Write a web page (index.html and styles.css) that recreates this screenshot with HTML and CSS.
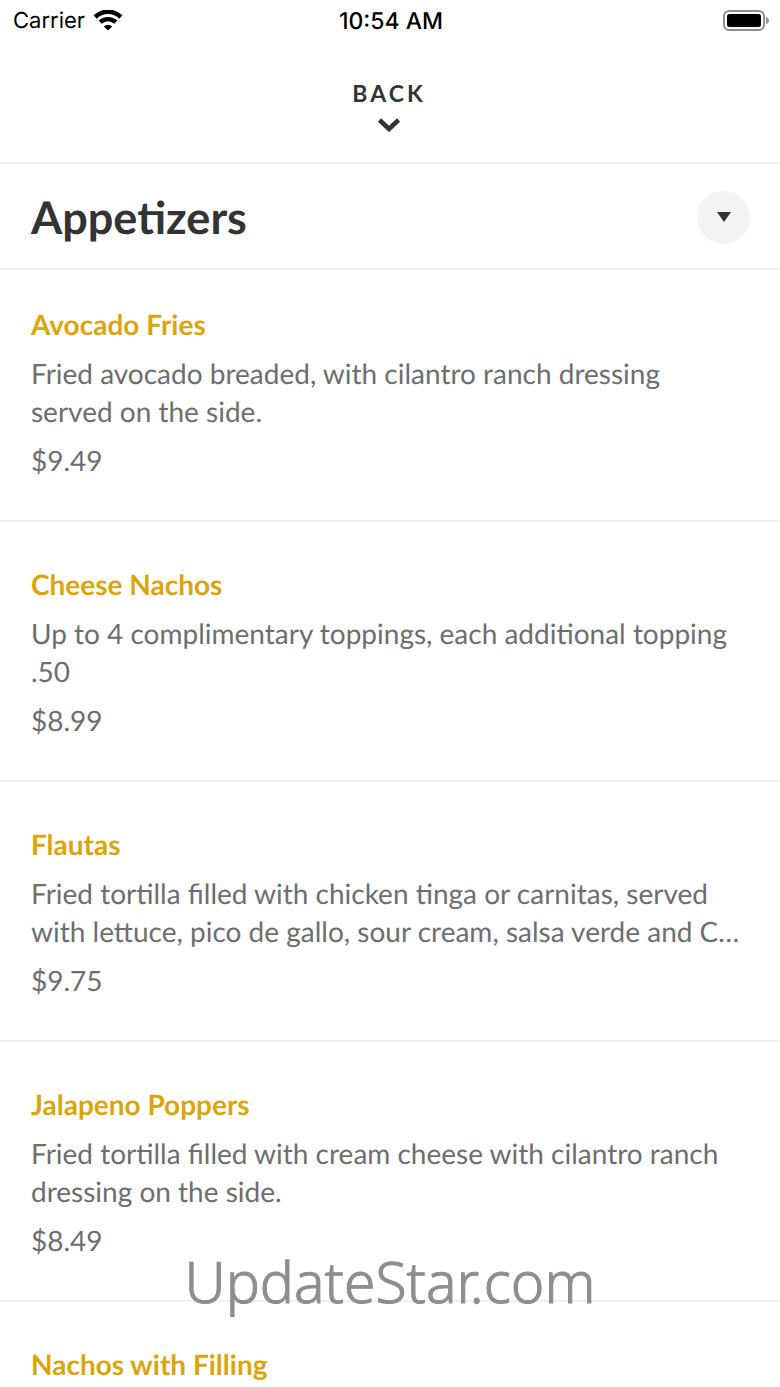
FILE: index.html
```html
<!DOCTYPE html>
<html lang="en">
<head>
  <meta charset="UTF-8">
  <meta name="viewport" content="width=device-width, initial-scale=1.0">
  <title>Appetizers</title>
  <link rel="stylesheet" href="styles.css">
</head>
<body>
  <div class="status-bar">
    <div class="carrier">
      <span>Carrier</span>
      <svg class="wifi" width="30" height="22" viewBox="0 0 30 22" aria-hidden="true">
        <path d="M2.2 7 A18.4 18.4 0 0 1 27.8 7" fill="none" stroke="#000" stroke-width="4.6"/>
        <path d="M7.2 12.2 A11.3 11.3 0 0 1 22.8 12.2" fill="none" stroke="#000" stroke-width="4.4"/>
        <path d="M15 20.5 L10.8 16.4 A6 6 0 0 1 19.2 16.4 Z"/>
      </svg>
    </div>
    <div class="time">10:54 AM</div>
    <svg class="battery" width="46" height="22" viewBox="0 0 46 22" aria-hidden="true">
      <rect x="1" y="1" width="40" height="19" rx="5" fill="none" stroke="#8e8e8e" stroke-width="2"/>
      <rect x="4" y="4" width="34" height="13" rx="2.5"/>
      <path d="M43 7 Q46 8 46 10.5 Q46 13 43 14 Z" fill="#8e8e8e"/>
    </svg>
  </div>

  <button class="back">
    <span>BACK</span>
    <svg width="22" height="14" viewBox="0 0 22 14" aria-hidden="true">
      <path d="M1.5 2 L11 11 L20.5 2" fill="none" stroke="#333" stroke-width="4.6"/>
    </svg>
  </button>

  <header class="category">
    <h1>Appetizers</h1>
    <button class="toggle" aria-label="Choose category">
      <svg width="14" height="10" viewBox="0 0 14 10" aria-hidden="true">
        <path d="M0 0 H14 L7 10 Z" fill="#333"/>
      </svg>
    </button>
  </header>

  <main class="menu">
    <article class="item">
      <h2>Avocado Fries</h2>
      <p class="description">Fried avocado breaded, with cilantro ranch dressing served on the side.</p>
      <p class="price">$9.49</p>
    </article>
    <article class="item">
      <h2>Cheese Nachos</h2>
      <p class="description">Up to 4 complimentary toppings, each additional topping .50</p>
      <p class="price">$8.99</p>
    </article>
    <article class="item">
      <h2>Flautas</h2>
      <p class="description">Fried tortilla filled with chicken tinga or carnitas, served with lettuce, pico de gallo, sour cream, salsa verde and C…</p>
      <p class="price">$9.75</p>
    </article>
    <article class="item">
      <h2>Jalapeno Poppers</h2>
      <p class="description">Fried tortilla filled with cream cheese with cilantro ranch dressing on the side.</p>
      <p class="price">$8.49</p>
    </article>
    <article class="item">
      <h2>Nachos with Filling</h2>
    </article>
  </main>

  <div class="watermark">UpdateStar.com</div>
</body>
</html>
```
FILE: styles.css
```css
* { box-sizing: border-box; }
body {
  margin: 0;
  font-family: Lato, sans-serif;
  font-size: 28px;
  line-height: 38px;
  color: #6e6e6e;
  background: #fff;
  text-rendering: geometricPrecision;
}
h1, h2, p { margin: 0; }
button {
  border: none;
  padding: 0;
  font-family: inherit;
  cursor: pointer;
}

.status-bar {
  display: grid;
  grid-template-columns: 1fr auto 1fr;
  align-items: center;
  height: 41px;
  padding: 0 11px 0 13px;
  font-family: Inter, sans-serif;
  font-size: 22px;
  color: #000;
}
.carrier { display: flex; align-items: center; gap: 8px; }
.time { font-size: 23px; font-weight: 500; }
.battery { justify-self: end; }

.back {
  display: flex;
  flex-direction: column;
  align-items: center;
  gap: 10px;
  width: 100%;
  padding: 37px 2px 30px 0;
  background: none;
  color: #333;
  font-size: 23px;
  line-height: 30px;
  font-weight: bold;
  letter-spacing: 3px;
}

.category {
  display: flex;
  align-items: center;
  justify-content: space-between;
  padding: 26px 30px 24px 31px;
  border-top: 2px solid #f0f0f0;
  border-bottom: 2px solid #f0f0f0;
}
.category h1 {
  font-size: 45px;
  line-height: 54px;
  color: #333;
}
.toggle {
  display: flex;
  align-items: center;
  justify-content: center;
  width: 53px;
  height: 53px;
  border-radius: 50%;
  background: #f4f4f4;
}

.item {
  display: flex;
  flex-direction: column;
  gap: 11px;
  padding: 43px 34px 41px 31px;
  border-bottom: 2px solid #f0f0f0;
}
.item:first-child { padding-top: 35px; }
.item:last-child { padding-bottom: 0; border-bottom: none; }
.item h2 {
  font-size: 28px;
  color: #dba50d;
}

.watermark {
  position: absolute;
  top: 1242px;
  left: 0;
  width: 100%;
  text-align: center;
  font-family: "Noto Sans", sans-serif;
  font-size: 57px;
  line-height: 78px;
  font-weight: 300;
  color: #8e8e8e;
  -webkit-text-stroke: 1px #8e8e8e;
}
```
